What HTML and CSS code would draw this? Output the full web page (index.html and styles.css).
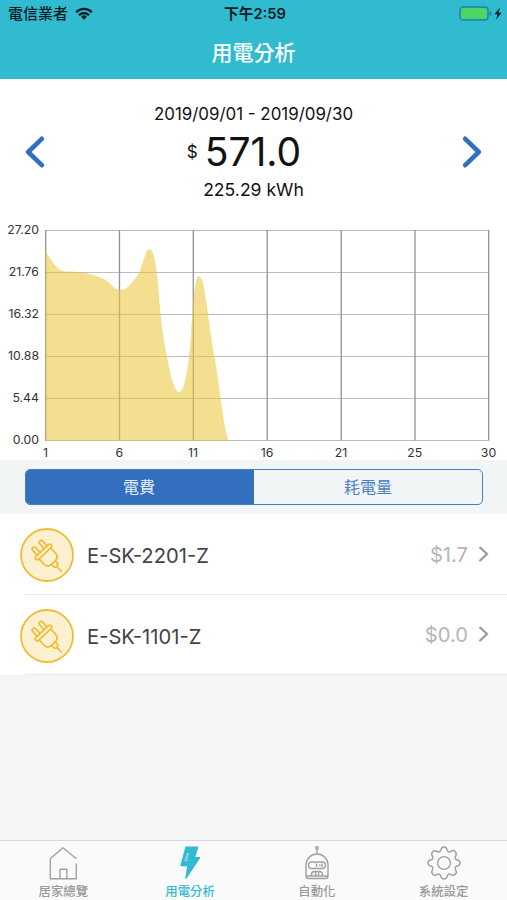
FILE: index.html
```html
<!DOCTYPE html>
<html lang="zh-Hant">
<head>
    <meta charset="UTF-8">
    <meta name="viewport" content="width=device-width, initial-scale=1.0">
    <title>用電分析</title>
    <link rel="stylesheet" href="styles.css">
</head>
<body>

<svg class="defs" width="0" height="0">
    <symbol id="plug" viewBox="0 0 54 54">
        <circle cx="27" cy="27" r="26" fill="#fbf0cf" stroke="#efbd35" stroke-width="1.8"/>
        <g transform="translate(23.5 24) rotate(-43)" fill="none" stroke="#efbd35" stroke-width="1.7" stroke-linejoin="round" stroke-linecap="round">
            <rect x="-10.5" y="-1.9" width="21" height="3.8" rx="1.9"/>
            <path d="M-6.8 -2v-6.5a2 2 0 0 1 4 0v6.5M2.8 -2v-6.5a2 2 0 0 1 4 0v6.5"/>
            <path d="M-8 2v7q0 5 5 5.5h6q5 -.5 5 -5.5v-7"/>
            <path d="M-2.5 14.5v3q0 2 2.5 2t2.5 -2v-3M0 19.5v6.5"/>
        </g>
    </symbol>
</svg>

<header class="header">
    <div class="status">
        <div class="carrier">
            <span>電信業者</span>
            <svg width="18" height="13" viewBox="0 0 18 13" fill="none" stroke="#071c20" stroke-width="2.3">
                <path d="M1.2 5.2a11 11 0 0 1 15.6 0M4 8.3a7 7 0 0 1 10 0"/>
                <path d="M9 12.7l-2.9-3a4.2 4.2 0 0 1 5.8 0z" fill="#071c20" stroke="none"/>
            </svg>
        </div>
        <div class="time">下午2:59</div>
        <div class="battery">
            <svg width="43" height="15" viewBox="0 0 43 15">
                <rect x="1" y="1" width="28" height="13" rx="3" fill="none" stroke="#218594" stroke-width="1.3"/>
                <rect x="2.3" y="2.3" width="25.4" height="10.4" rx="1.5" fill="#4bd964"/>
                <path d="M30.5 5q2 .5 2 2.5t-2 2.5z" fill="#218594"/>
                <path d="M41 1.5l-5.5 6.7h3l-1.5 5.3 5.5-6.8h-3z" fill="#071c20"/>
            </svg>
        </div>
    </div>
    <h1>用電分析</h1>
</header>

<section class="summary">
    <svg class="arrow" width="21" height="34" viewBox="0 0 21 34"><path d="M17.8 3.8L4.2 17l13.6 13.2"/></svg>
    <div class="period">
        <div class="dates">2019/09/01 - 2019/09/30</div>
        <div class="cost"><span class="currency">$</span><span class="amount">571.0</span></div>
        <div class="usage">225.29 kWh</div>
    </div>
    <svg class="arrow" width="21" height="34" viewBox="0 0 21 34"><path d="M3.2 3.8L16.8 17 3.2 30.2"/></svg>
</section>

<svg class="chart" width="507" height="245" viewBox="0 215 507 245">
    <g class="grid-x">
        <path d="M45 230.5H489M45 272.5H489M45 314.5H489M45 356.5H489M45 398.5H489M45 440.5H489"/>
    </g>
    <g class="grid-y">
        <path d="M45.7 230V440.5M119.5 230V440.5M193.3 230V440.5M267.2 230V440.5M341.2 230V440.5M415 230V440.5M488.7 230V440.5"/>
    </g>
    <path class="area" d="M45.5 251.5C53 262 57 271 65 271.5C84 271 93 275 102 278C110 281 113 290 120.5 290C128 290 132 282 138 275C142 270 145 249 149 249C154 249 156 263 158 284C160 310 162 332 166 352C169 368 174 392 179 392C185 392 189 364 191 334C193 300 195 276 199 276C205 276 208 322 215 360C220 388 223 425 228.5 440.5H45.5Z"/>
    <g class="labels-y">
        <text x="39" y="234.3">27.20</text>
        <text x="39" y="276.3">21.76</text>
        <text x="39" y="318.1">16.32</text>
        <text x="39" y="360.1">10.88</text>
        <text x="39" y="402.1">5.44</text>
        <text x="39" y="444">0.00</text>
    </g>
    <g class="labels-x">
        <text x="45.5" y="457">1</text>
        <text x="119.3" y="457">6</text>
        <text x="193" y="457">11</text>
        <text x="267" y="457">16</text>
        <text x="341" y="457">21</text>
        <text x="414.8" y="457">25</text>
        <text x="488.5" y="457">30</text>
    </g>
</svg>

<div class="segment-bar">
    <div class="segments">
        <div class="segment active">電費</div>
        <div class="segment">耗電量</div>
    </div>
</div>

<main class="devices">
    <div class="device">
        <svg class="device-icon" width="54" height="54"><use href="#plug"/></svg>
        <div class="device-name">E-SK-2201-Z</div>
        <div class="device-cost">$1.7</div>
        <svg class="chevron" width="11" height="18" viewBox="0 0 11 18"><path d="M1.5 2l7.5 7-7.5 7"/></svg>
    </div>
    <div class="device">
        <svg class="device-icon" width="54" height="54"><use href="#plug"/></svg>
        <div class="device-name">E-SK-1101-Z</div>
        <div class="device-cost">$0.0</div>
        <svg class="chevron" width="11" height="18" viewBox="0 0 11 18"><path d="M1.5 2l7.5 7-7.5 7"/></svg>
    </div>
</main>

<nav class="tabs">
    <div class="tab">
        <svg width="36" height="36" viewBox="0 0 36 36">
            <path d="M31.3 13.8L18 2.8 5.3 13.8V33.8H31.3V18.5M15 33.5V24.3h6.8v9.5"/>
        </svg>
        <span>居家總覽</span>
    </div>
    <div class="tab active">
        <svg width="36" height="36" viewBox="0 0 36 36">
            <path class="bolt" d="M14 2.2H25.6L22.4 12.6H27.6L14 33.2 16 20.6H9z"/>
            <path class="shine" d="M15.5 8l-2.6 8h2l1.6-8"/>
        </svg>
        <span>用電分析</span>
    </div>
    <div class="tab">
        <svg width="36" height="36" viewBox="0 0 36 36">
            <circle cx="18" cy="3" r="1.3"/>
            <path d="M18 4.5V9M7 31V20a11 11 0 0 1 22 0V31q0 2.5-2.5 2.5h-17Q7 33.5 7 31zM7.5 31h21"/>
            <rect x="9.5" y="17" width="17" height="6.5" rx="3.2"/>
            <path d="M17.5 18.5v3.5M20 20.2h1.5M23 18.5v3.5M12.5 31v-1.5q0-3 3-3h5q3 0 3 3V31M16.5 27v4M19.5 27v4"/>
        </svg>
        <span>自動化</span>
    </div>
    <div class="tab">
        <svg width="36" height="36" viewBox="0 0 36 36">
            <circle cx="18" cy="18" r="6.4"/>
            <path d="M14.8 5.2Q15.3 2 18 2T21.2 5.2Q22.2 7.6 24.8 6.5Q27.4 4.6 29.3 6.7T29.5 11.2Q28.4 13.8 30.8 14.8Q34 15.3 34 18T30.8 21.2Q28.4 22.2 29.5 24.8Q31.4 27.4 29.3 29.3T24.8 29.5Q22.2 28.4 21.2 30.8Q20.7 34 18 34T14.8 30.8Q13.8 28.4 11.2 29.5Q8.6 31.4 6.7 29.3T6.5 24.8Q7.6 22.2 5.2 21.2Q2 20.7 2 18T5.2 14.8Q7.6 13.8 6.5 11.2Q4.6 8.6 6.7 6.7T11.2 6.5Q13.8 7.6 14.8 5.2z"/>
        </svg>
        <span>系統設定</span>
    </div>
</nav>

</body>
</html>
```
FILE: styles.css
```css
* {
    box-sizing: border-box;
}
body {
    margin: 0;
    height: 100vh;
    display: flex;
    flex-direction: column;
    overflow: hidden;
    font-family: Inter, "Noto Sans CJK TC", sans-serif;
    background-color: #f3f5f7;
}
svg {
    display: block;
    flex-shrink: 0;
}
.defs {
    display: none;
}
.header {
    height: 79px;
    flex-shrink: 0;
    background-color: #30bbd0;
    color: #fff;
}
.status {
    display: grid;
    grid-template-columns: 1fr auto 1fr;
    align-items: center;
    height: 27px;
    padding: 0 5px 0 8px;
    color: #071c20;
    font-size: 15px;
    font-weight: 500;
}
.carrier {
    display: flex;
    align-items: center;
    gap: 7px;
}
.carrier span,
.time {
    margin-top: -2px;
}
.time {
    font-weight: 600;
    font-size: 14.7px;
}
.battery {
    justify-self: end;
}
h1 {
    margin: 11px 0 0;
    font-size: 21px;
    line-height: 30px;
    font-weight: 500;
    text-align: center;
}
.summary {
    height: 136px;
    flex-shrink: 0;
    display: flex;
    justify-content: space-between;
    padding: 22px 24px 0;
    background-color: #fff;
}
.arrow {
    margin-top: 34px;
    fill: none;
    stroke: #326fbe;
    stroke-width: 4.6;
    stroke-linecap: round;
    stroke-linejoin: round;
}
.period {
    text-align: center;
    color: #111;
}
.dates {
    font-size: 16.9px;
    line-height: 26px;
}
.cost {
    display: flex;
    justify-content: center;
    align-items: center;
    gap: 7px;
    height: 50px;
    padding-right: 19px;
}
.currency {
    font-size: 17px;
}
.amount {
    margin-top: -2px;
    font-size: 39px;
    font-weight: 400;
}
.usage {
    font-size: 17.6px;
    line-height: 26px;
}
.chart {
    background-color: #fff;
    font-size: 12.3px;
}
.grid-x {
    stroke: #bdbdbd;
    stroke-width: 1.2;
}
.grid-y {
    stroke: #929292;
    stroke-width: 1.3;
}
.area {
    fill: #ecc63e;
    fill-opacity: 0.58;
}
.labels-y {
    text-anchor: end;
    fill: #333;
}
.labels-x {
    text-anchor: middle;
    fill: #333;
}
.segment-bar {
    height: 54px;
    flex-shrink: 0;
    padding: 9px 24px 9px 25px;
    background-color: #f2f5f6;
}
.segments {
    display: grid;
    grid-template-columns: 1fr 1fr;
    height: 36px;
    border: 1px solid #4380c7;
    border-radius: 5px;
    overflow: hidden;
}
.segment {
    line-height: 35px;
    text-align: center;
    font-size: 16px;
    color: #4a80c5;
}
.segment.active {
    padding-right: 2px;
    background-color: #326fbe;
    color: #e5effa;
}
.devices {
    background-color: #fff;
}
.device {
    display: flex;
    align-items: center;
    height: 80.5px;
    padding: 2px 18px 0 20px;
    background: linear-gradient(#e9ebed, #e9ebed) 25px 100% / 100% 1px no-repeat;
}
.device-name {
    flex: 1;
    margin: 1px 0 0 13px;
    font-size: 20.2px;
    color: #414346;
}
.device-cost {
    margin-right: 10px;
    padding-bottom: 2px;
    font-size: 20.2px;
    color: #b5b5b5;
}
.chevron {
    margin-bottom: 3px;
    fill: none;
    stroke: #999;
    stroke-width: 2.2;
}
.tabs {
    display: grid;
    grid-template-columns: repeat(4, 1fr);
    height: 60px;
    margin-top: auto;
    border-top: 1px solid #d7d8da;
    background-color: #fafafa;
}
.tab {
    display: flex;
    flex-direction: column;
    align-items: center;
    padding-top: 4px;
    font-size: 12.4px;
    line-height: 18px;
    font-weight: 500;
    color: #989898;
}
.tab svg {
    fill: none;
    stroke: #a0a0a0;
    stroke-width: 1.4;
    stroke-linejoin: round;
    margin-bottom: 2px;
}
.tab.active {
    color: #30bbd0;
}
.tab .bolt {
    fill: #30bbd0;
    stroke: #30bbd0;
}
.tab .shine {
    stroke: #b9e7ee;
    stroke-width: 0.8;
}
```
